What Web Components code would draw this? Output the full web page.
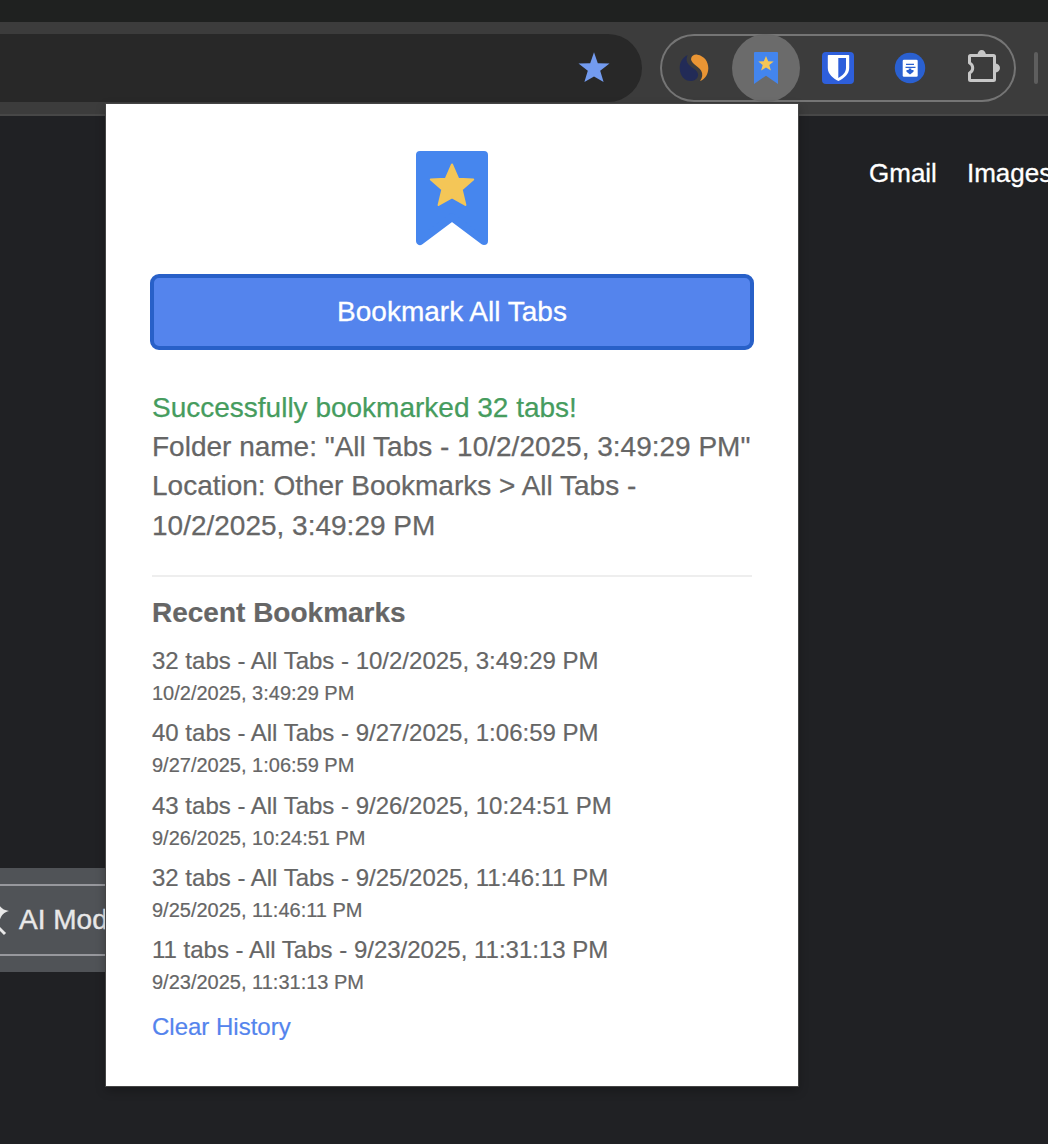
<!DOCTYPE html>
<html lang="en"><head><meta charset="utf-8"><title>Bookmark All Tabs</title>
<style>html,body{margin:0;height:1144px;overflow:hidden;background:#202124}</style></head><body>
<browser-window>
  <browser-toolbar slot="toolbar"></browser-toolbar>
  <new-tab-page slot="page"></new-tab-page>
  <bookmark-popup slot="popup">
    <status-message slot="status"></status-message>
    <recent-bookmarks slot="history">
      <history-item><span slot="name">32 tabs - All Tabs - 10/2/2025, 3:49:29 PM</span><span slot="date">10/2/2025, 3:49:29 PM</span></history-item>
      <history-item><span slot="name">40 tabs - All Tabs - 9/27/2025, 1:06:59 PM</span><span slot="date">9/27/2025, 1:06:59 PM</span></history-item>
      <history-item><span slot="name">43 tabs - All Tabs - 9/26/2025, 10:24:51 PM</span><span slot="date">9/26/2025, 10:24:51 PM</span></history-item>
      <history-item><span slot="name">32 tabs - All Tabs - 9/25/2025, 11:46:11 PM</span><span slot="date">9/25/2025, 11:46:11 PM</span></history-item>
      <history-item><span slot="name">11 tabs - All Tabs - 9/23/2025, 11:31:13 PM</span><span slot="date">9/23/2025, 11:31:13 PM</span></history-item>
    </recent-bookmarks>
  </bookmark-popup>
</browser-window>
<script>
const define = (name, html) => customElements.define(name, class extends HTMLElement {
  constructor() { super(); this.attachShadow({mode: 'open'}).innerHTML = html; }
});

define('browser-window', `<style>
:host{display:flex;flex-direction:column;position:relative;width:1048px;height:1144px;overflow:hidden;background:#202124;font-family:"Liberation Sans",Arial,sans-serif}
.tabs{height:22px;flex:none;background:#1f2120}
slot[name=page]::slotted(*){flex:1}
slot[name=popup]::slotted(*){position:absolute;left:106px;top:104px}
</style><div class="tabs"></div><slot name="toolbar"></slot><slot name="page"></slot><slot name="popup"></slot>`);

define('browser-toolbar', `<style>
:host{display:flex;flex:none;box-sizing:border-box;height:94px;padding-top:12px;background:#3c3c3c;border-bottom:2px solid #474747;align-items:flex-start}
.omni{box-sizing:border-box;width:642px;height:68px;border-radius:0 34px 34px 0;background:#282828;display:flex;align-items:center;justify-content:flex-end;padding-right:32px}
.ext{box-sizing:border-box;width:356px;height:68px;margin-left:18px;border-radius:34px;box-shadow:inset 0 0 0 2px #757575;display:flex;align-items:center}
.cell{width:72px;height:68px;display:flex;align-items:center;justify-content:center;flex:none}
.cell:first-child{width:68px}
.active{background:#6b6b6b;border-radius:50%;width:68px;margin:0 0 0 4px}
.active+.cell{margin-left:2px}
.sep{width:4px;height:32px;border-radius:2px;background:#5e5e5e;margin:18px 0 0 18px}
svg{display:block;overflow:visible}
</style>
<div class="omni"><svg width="32" height="32" viewBox="0 0 32 32"><path fill="#739bef" d="M16 .2 19.800 11.300l11.700.3-9.300 7.100 3.400 11.200L16 24.500 6.400 29.900l3.400-11.200L.5 11.600l11.700-.3z"/></svg></div>
<div class="ext">
<div class="cell"><svg width="32" height="32" viewBox="0 0 32 32"><path fill="#222b57" d="M9.700 3.100C4.500 5.600 1.700 10.300 1.700 16c0 7.700 5 13.100 11.300 13.100 4.400 0 7.100-3.100 7.100-6.500 0-5.200-8.500-7.300-10.800-12.200-1.200-2.500-.8-5 .4-7.300z"/><path fill="#ea9534" d="M13.200 6c.8-2.200 3-3.800 6.200-3.300C26.200 3.800 30.300 9.500 30.300 16c0 6-2.800 11-8.300 13.100 2.500-3.200 3-7.100 1.200-10.300-2.700-4.700-11.500-8-10-12.800z"/></svg></div>
<div class="cell active"><svg width="24" height="32" viewBox="0 0 24 32"><path fill="#4385ee" d="M1 0h22q1 0 1 1v31l-12-8.300L0 32V1q0-1 1-1z"/><path fill="#f4c657" d="m12 4 2.200 5.300 5.500.1-4.400 3.700 1.600 5.500-4.900-3.200-4.900 3.200 1.600-5.500-4.400-3.700 5.500-.1z"/></svg></div>
<div class="cell"><svg width="32" height="32" viewBox="0 0 32 32"><rect width="32" height="32" rx="4" fill="#2e5fdb"/><path fill="#fff" d="M6.500 3h20q.7 0 .7.700V16c0 6-5.200 10.300-10.800 13C11 26.300 5.800 22 5.800 16V3.700q0-.7.700-.7z"/><path fill="#2e5fdb" d="M16.300 6H24v10c0 4.300-3.500 7.600-7.700 9.900z"/></svg></div>
<div class="cell"><svg width="32" height="32" viewBox="0 0 32 32"><circle cx="16" cy="16" r="15.200" fill="#2a60d0"/><rect x="8.700" y="7.700" width="15" height="17" rx="1.300" fill="#fff"/><path stroke="#2a60d0" stroke-width="1.300" d="M12 12.300h8M11.500 15.300h10"/><path fill="#2a60d0" d="M14.700 16.500h2.600v1.600h2.200v1.600L16 22.500l-3.500-2.800v-1.600h2.200z"/></svg></div>
<div class="cell"><svg width="34" height="34" viewBox="0 0 34 34"><path fill="none" stroke="#c7c7c7" stroke-width="3" stroke-linejoin="round" d="M5.500 4.500h23q1 0 1 1v23q0 1-1 1h-23q-1 0-1-1v-6.500a5.500 5.500 0 0 0 0-10v-6.500q0-1 1-1z"/><path fill="#c7c7c7" d="M12.500 4a4.200 5 0 0 1 8.400 0zM30 12.500a5 4.500 0 0 1 0 9z"/></svg></div>
</div><div class="sep"></div>`);

define('new-tab-page', `<style>
:host{display:flex;flex-direction:column;background:#202124;overflow:hidden}
nav{display:flex;padding:39px 0 0 869px;gap:30px;font-size:26px;line-height:36px;color:#fff;white-space:nowrap;-webkit-text-stroke:.3px}
.band{box-sizing:border-box;width:150px;height:104px;margin-top:677px;padding:16px 0;background:#505357}
.chip{box-sizing:border-box;height:72px;border:solid #97989d;border-width:2px 0;display:flex;align-items:center;color:#e8e8e8;font-size:28px;white-space:nowrap;-webkit-text-stroke:.4px}
svg{width:19px;height:60px;flex:none}
</style><nav><span>Gmail</span><span>Images</span></nav><div class="band"><div class="chip"><svg viewBox="0 0 19 60"><path fill="#e8e8e8" d="M-4 8C-1 17 2 20 9 21c-6 1.500-8 5-10 11h-3z"/><path stroke="#e8e8e8" stroke-width="3" d="m-4 35 9 9"/></svg><span>AI Mode</span></div></div>`);

define('bookmark-popup', `<style>
:host{display:flex;flex-direction:column;box-sizing:border-box;width:692px;height:982px;padding:46px;background:#fff;box-shadow:0 0 0 1px #454545,0 4px 10px rgba(0,0,0,.3);color:#666}
.logo{display:block;width:74px;height:96px;margin:0 auto;flex:none}
button{box-sizing:border-box;width:604px;height:76px;margin:28px -2px 0;flex:none;border:4px solid #2860c8;border-radius:9px;background:#5484ed;color:#fff;font:28px "Liberation Sans",Arial,sans-serif;padding:0;-webkit-text-stroke:.3px}
</style><svg class="logo" viewBox="0 0 74 96"><path fill="#4686ee" stroke="#4686ee" stroke-width="8" stroke-linejoin="round" d="M5 5h64v86L37 67 5 91z"/><path fill="#f4c657" stroke="#f4c657" stroke-width="2" stroke-linejoin="round" d="m37 14.500 6.200 14.200 15 .8-11.500 10 3.700 15.500L37 47.500 23.600 55l3.700-15.500-11.500-10 15-.8z"/></svg>
<button>Bookmark All Tabs</button><slot name="status"></slot><slot name="history"></slot>`);

define('status-message', `<style>
:host{display:block;margin-top:38px;font-size:28px;line-height:39.200px;white-space:nowrap;-webkit-text-stroke:.25px}
.ok{color:#469c5e}
</style><div class="ok">Successfully bookmarked 32 tabs!</div><div>Folder name: "All Tabs - 10/2/2025, 3:49:29 PM"</div><div>Location: Other Bookmarks &gt; All Tabs -</div><div>10/2/2025, 3:49:29 PM</div>`);

define('recent-bookmarks', `<style>
:host{display:block;margin-top:30px;border-top:2px solid #eee;white-space:nowrap;-webkit-text-stroke:.2px}
h3{margin:16px 0 12px;font:bold 28px/39px "Liberation Sans",Arial,sans-serif}
a{display:block;margin-top:12.250px;font-size:24px;line-height:34px;color:#5484ed}
</style><h3>Recent Bookmarks</h3><slot></slot><a>Clear History</a>`);

define('history-item', `<style>
:host{display:block;height:64.400px;margin-bottom:8px}
div{font-size:24px;line-height:34px}
.date{font-size:20px;line-height:30px}
</style><div><slot name="name"></slot></div><div class="date"><slot name="date"></slot></div>`);
</script></body></html>
